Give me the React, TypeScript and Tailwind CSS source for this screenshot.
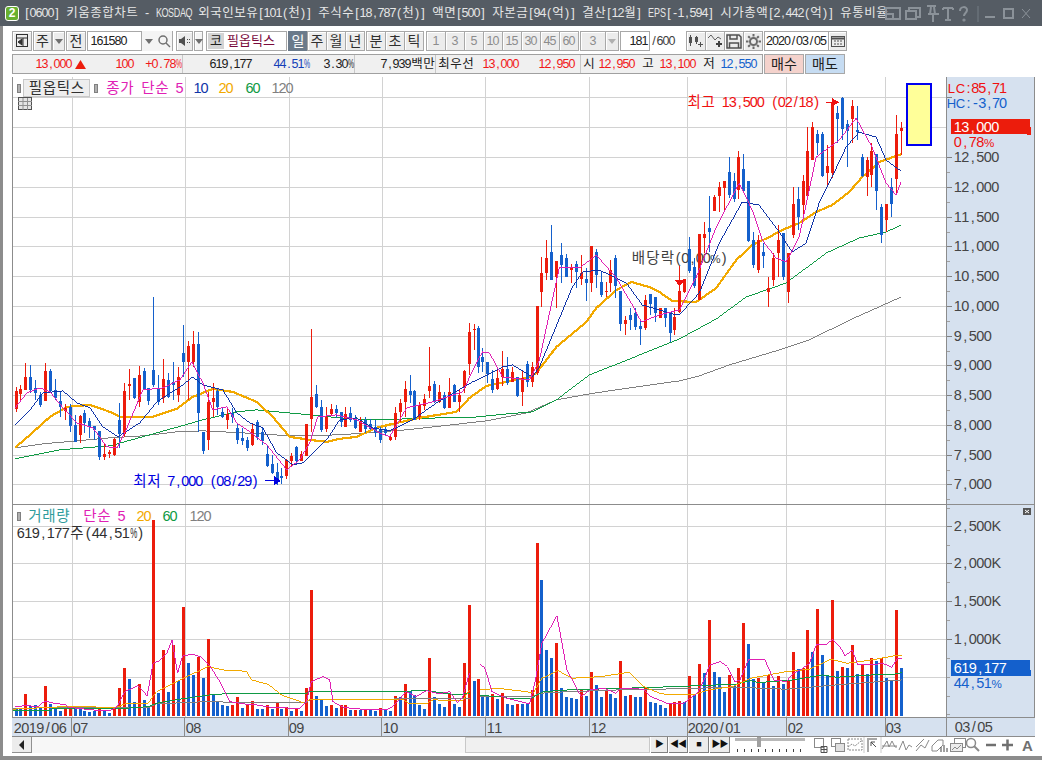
import React from "react";

const RED = "#ec1c0c";
const BLUE = "#1460cc";
const MAGENTA = "#e020b4";
const NAVY = "#1034a8";
const ORANGE = "#f2a900";
const GREEN = "#0f9a44";
const GRAY = "#808080";
const MONTHS = [72, 185, 289, 382, 486, 590, 688, 787, 886];

// candles: [red, bodyTop, bodyBottom, wickTop, wickBottom], read off a 3x crop
const candlesA = [
  [1,212,267,200,275],[1,207,222,195,240],[1,170,210,130,210],[0,170,210,135,220],[0,205,218,180,240],[0,225,255,215,262],
  [1,153,242,130,242],[0,152,212,148,215],[0,210,235,178,240],[0,243,260,215,290],[1,265,272,252,300],[0,262,318,252,335],
  [0,315,365,285,367],[1,287,345,285,370],[0,280,310,270,340],[0,303,320,295,355],[0,317,330,317,360],[0,332,413,332,420],
  [1,402,413,370,420],[1,398,403,392,415],[1,357,405,355,410],[0,300,342,248,385],[1,213,342,190,350],[1,192,197,147,240],
  [0,175,235,175,237],[1,165,245,138,260],[0,153,208,145,208],[0,205,242,205,255],[0,150,195,-69,200],[0,205,245,165,255],
  [1,178,235,118,250],[0,180,232,160,235],[0,186,194,125,240],[1,170,225,140,245],[0,100,127,15,170],[1,78,127,62,240],
  [1,72,127,33,140],[0,72,280,37,335],[0,335,395,335,403],[1,245,360,215,390],[1,235,245,190,290],[0,212,262,205,285],
  [0,275,290,262,295],[1,282,300,265,327],[0,280,290,265,310],[0,325,360,312,372],[0,355,362,325,375],[0,360,385,350,395],
  [1,326,375,310,378],[0,305,352,300,360],[0,335,362,320,375],[0,402,438,378,442],[0,432,460,405,462],[0,457,480,430,495],
  [0,468,476,445,493],[1,422,468,418,478],[1,410,423,400,440],[0,383,423,380,437],[1,402,423,395,425],[1,312,408,312,410],
  [1,232,296,28,335],[0,223,262,195,265],[0,262,330,240,335],[1,292,328,262,335],[1,267,283,253,285],[0,267,280,255,295],
];
const candlesB = [
  [0,575,605,575,620],[1,582,620,560,620],[0,578,600,560,605],[0,597,625,585,628],[1,603,635,590,635],[0,600,628,590,640],
  [0,612,628,598,630],[0,622,638,600,650],[0,630,660,620,670],[0,627,640,620,645],[1,652,660,648,662],[1,578,650,560,660],
  [1,548,575,538,605],[1,507,545,483,590],[0,513,525,465,550],[0,513,600,510,600],[1,555,590,545,600],[1,537,558,522,570],
  [1,497,512,380,535],[0,492,545,482,548],[1,517,545,495,550],[0,525,565,515,567],[1,517,565,475,565],[0,495,545,492,547],
  [1,525,545,510,575],[1,453,503,450,520],[1,337,432,310,465],[1,327,330,313,390],[0,325,440,317,458],[0,412,427,385,455],
  [0,427,462,425,490],[0,477,510,450,518],[1,473,507,447,510],[1,447,470,393,497],[0,447,490,412,495],[1,457,485,440,487],
  [0,472,527,472,530],[1,473,515,450,558],[0,432,485,422,500],[1,440,487,425,500],[1,258,460,258,465],[1,158,215,112,260],
  [1,113,160,60,180],[0,97,180,15,180],[1,123,170,122,263],[0,105,135,68,188],[0,113,170,103,170],[1,142,150,132,188],
  [0,132,155,122,205],[1,158,178,105,195],[0,177,188,145,242],[1,78,188,78,215],[0,97,165,87,205],[0,185,225,157,232],
  [1,212,215,185,232],[1,150,188,120,215],[0,113,197,105,235],[0,212,313,212,333],[1,300,313,287,345],[0,285,300,265,330],
  [0,280,320,265,330],[0,317,327,300,375],[1,240,325,225,330],[0,222,252,222,285],[0,232,280,232,307],[1,265,293,265,295],
  [0,265,295,265,320],[0,277,340,277,367],[1,290,330,265,345],
];
const candlesC = [
  [1,633,695,558,700],[1,597,637,597,640],[0,507,572,472,580],[0,562,618,535,625],[1,462,660,462,660],[1,462,475,427,520],
  [0,445,455,347,515],[1,350,392,345,392],[1,320,348,305,395],[1,303,323,303,392],[0,277,345,232,355],[0,303,358,280,365],
  [1,232,330,213,358],[0,267,333,222,340],[0,303,483,303,485],[0,480,555,455,565],[1,480,570,465,580],[0,516,528,490,565],
  [1,625,635,590,680],[1,535,600,520,617],[1,480,518,435,590],[0,460,590,460,600],[1,518,635,518,670],[1,373,465,322,475],
  [0,358,410,322,450],[1,303,375,285,410],[1,213,348,140,352],[1,140,240,125,240],[0,160,188,150,225],[0,160,288,155,290],
  [1,258,278,195,320],[1,68,280,55,295],[0,97,117,78,190],[0,52,145,50,180],[0,132,152,118,260],[1,78,117,60,190],
  [0,150,155,78,180],[0,232,288,222,290],[1,240,290,232,347],[1,213,285,190,322],[0,222,332,222,390],[0,380,465,372,490],
  [1,372,420,372,455],[0,322,372,295,410],[1,160,297,105,345],[1,142,152,125,225],
];
const toCandles = (rows: number[][], base: number) =>
  rows.map(([red, t, b, h, l]) => ({ red: !!red, top: base + t / 3, bottom: base + b / 3, high: base + h / 3, low: base + l / 3 }));
const candles = [...toCandles(candlesA, 320), ...toCandles(candlesB, 220), ...toCandles(candlesC, 80)];

// volume tops on the same 3x scale (y = 500 + v / 3), positive is a red bar, negative a blue one
const volumes = [
  -623,-627,582,-618,-616,-620,558,-612,-628,-632,628,620,-627,-627,-632,-635,-632,628,-630,-638,628,564,504,-537,-605,552,-600,-622,60,-578,
  450,-575,435,-543,320,-489,-525,472,-533,417,-585,-605,-615,-618,615,591,-623,613,603,-627,-627,615,-627,608,-627,622,-632,627,-632,564,
  270,-588,-600,-618,615,-623,616,616,-629,629,-629,626,-629,-632,624,-627,-632,588,-591,552,-573,-585,-615,-627,474,-591,-612,-621,580,-612,
  -621,489,315,-543,537,-590,-590,582,-597,579,-612,-615,612,-612,-612,570,128,-240,-450,-474,429,-564,-591,-594,-597,570,-588,516,-555,-591,
  570,-582,-594,483,-588,585,-591,-591,564,-606,-609,-615,-624,610,606,603,-606,528,-585,492,-519,360,-516,-531,-576,525,-558,504,369,-432,
  -536,534,-548,524,-558,528,-552,540,456,-508,504,390,-456,327,-465,-528,300,-513,501,-504,435,-522,495,-522,474,-483,474,-534,-540,330,-504,
];

const line = (pts: number[][], baseX: number, scaleX: number, baseY: number) =>
  pts.map(([x, y]) => `${(baseX + x / scaleX).toFixed(1)},${(baseY + y / 3).toFixed(1)}`).join(" ");

const priceLines = [
  { color: GRAY, w: 1, pts: "15,448 43,444 77,441 110,438 143,436 177,432 203,431 243,433 290,436 340,435 407,430 487,421 527,413 557,400 590,394 623,389 680,381 700,376 730,365 780,350 810,340 853,319 902,297" },
  { color: GREEN, w: 1, pts: "15,459 60,450 110,446 157,433 203,420 237,412 257,410 310,415 340,418 373,420 407,419 440,418 467,418 507,414 533,412 557,400 590,375 623,362 680,339 717,319 747,297 787,283 827,253 860,238 887,232 902,225" },
  { color: ORANGE, w: 2.2, pts: "15,448 30,435 50,417 67,407 90,405 110,412 120,417 153,417 177,409 193,397 213,389 233,392 257,402 273,417 290,437 310,440 327,442 340,439 357,437 377,428 393,424 420,418 457,412 470,398 487,386 527,378 537,373 557,347 587,322 597,308 617,290 632,282 650,287 660,292 673,301 697,302 717,288 737,260 753,245 770,237 783,230 800,223 817,212 833,205 850,192 863,177 880,162 902,154" },
  { color: NAVY, w: 1, pts: "15,425 30,410 43,393 63,391 77,403 90,408 103,427 118,437 140,423 157,402 183,385 193,377 203,385 223,390 237,413 250,423 263,428 277,453 293,465 303,463 327,440 340,420 357,418 373,428 390,431 413,420 437,403 473,382 503,367 513,365 533,377 540,367 573,287 583,272 600,270 627,283 643,305 677,315 680,315 700,293 720,243 743,202 760,205 780,232 793,252 807,243 820,203 830,183 847,147 860,132 877,137 887,160 902,171" },
  { color: MAGENTA, w: 1, pts: "15,408 27,393 40,388 50,392 63,408 77,423 93,428 107,447 117,448 127,428 143,390 163,388 180,380 192,362 203,383 213,410 227,407 237,423 250,432 267,445 287,470 300,460 310,443 318,417 337,415 357,420 380,433 390,437 407,408 433,402 463,392 477,363 483,352 490,353 503,377 530,380 540,360 560,267 580,268 597,255 617,278 633,305 642,322 660,315 680,310 697,277 717,227 740,183 753,210 763,240 777,258 787,262 800,237 817,157 840,140 857,118 873,147 887,183 897,195 902,182" },
];

const volLines = [
  {
    color: GRAY,
    a: [[5,625],[420,622],[440,612],[615,604],[645,607],[890,607],[900,600],[1380,595]],
    b: [[0,590],[150,590],[170,580],[250,575],[390,570],[500,568],[720,562],[860,568],[1000,555],[1183,540]],
  },
  {
    color: GREEN,
    a: [[5,632],[125,632],[126,627],[320,627],[415,620],[440,610],[510,598],[600,585],[670,580],[890,580],[900,574],[1180,574],[1250,572],[1340,585],[1380,580]],
    b: [[0,587],[60,590],[80,595],[145,595],[180,575],[250,570],[500,562],[720,553],[760,542],[780,548],[880,540],[960,525],[1000,532],[1100,525],[1170,522],[1183,518]],
  },
  {
    color: ORANGE,
    a: [[5,628],[165,620],[258,620],[260,623],[320,622],[350,610],[415,610],[440,575],[520,535],[595,500],[640,510],[710,514],[725,540],[775,553],[815,585],[885,610],[900,598],[1015,598],[1180,598],[1200,612],[1250,612],[1270,600],[1360,602],[1380,570]],
    b: [[0,570],[50,565],[130,575],[150,580],[175,535],[220,512],[260,535],[340,530],[420,517],[460,560],[510,582],[600,585],[640,570],[710,560],[760,535],[860,515],[925,508],[985,478],[1030,490],[1100,480],[1140,472],[1170,466],[1183,466]],
  },
  {
    color: MAGENTA,
    a: [[15,620],[50,617],[85,620],[105,603],[140,612],[165,613],[175,622],[245,630],[300,633],[320,622],[345,575],[385,557],[412,588],[430,490],[450,482],[470,462],[487,420],[503,520],[518,468],[545,463],[575,472],[600,497],[630,545],[660,605],[700,612],[740,615],[780,622],[870,626],[890,605],[905,545],[940,530],[960,540],[970,605],[1000,622],[1040,627],[1130,630],[1150,620],[1190,575],[1220,590],[1250,572],[1290,582],[1320,575],[1345,608],[1360,590],[1380,520]],
    b: [[0,495],[15,505],[35,575],[75,595],[140,612],[155,550],[175,430],[217,347],[245,510],[285,590],[310,570],[350,565],[382,580],[395,565],[460,568],[480,590],[530,612],[570,612],[610,580],[630,540],[645,495],[675,485],[695,500],[715,545],[730,540],[755,478],[800,480],[825,540],[860,545],[880,520],[900,510],[925,490],[945,432],[970,435],[990,418],[1010,440],[1025,468],[1045,450],[1060,495],[1100,495],[1130,490],[1155,502],[1172,475],[1183,475]],
  },
];

const barX = (i: number) => Math.round(15.5 + 4.925 * i);
const isWide = (c: string) => c.charCodeAt(0) > 0x2e80;

// the original uses a fixed-cell bitmap font: half cell for latin, full cell for hangul
function Mono({ text, half = 6, className = "" }: { text: string; half?: 6 | 7 | 7.5; className?: string }) {
  const cell = (c: string) => {
    if (half === 6) return isWide(c) ? "w-[12px]" : "w-[6px]";
    if (half === 7) return isWide(c) ? "w-[14px]" : "w-[7px]";
    return isWide(c) ? "w-[15px]" : "w-[7.5px]";
  };
  const squeeze = (c: string) => (c === "%" ? "scale-x-[0.55]" : "KOSDAQEP".includes(c) ? "scale-x-[0.72]" : "");
  return (
    <span className={`inline-flex items-baseline whitespace-pre ${className}`}>
      {[...text].map((c, i) => (
        <span key={i} className={`inline-flex shrink-0 justify-center ${cell(c)} ${squeeze(c)}`}>{c}</span>
      ))}
    </span>
  );
}

function Label({ x, y, text, half = 7.5, fill, size = 14.5 }: { x: number; y: number; text: string; half?: number; fill: string; size?: number }) {
  const glyph = (c: string): [number, number] => {
    if (isWide(c)) return [half * 2, size];
    if (c === "%") return [half * 1.4, size * 0.8];
    if (c === "K") return [9.5, size];
    if ("LHC".includes(c)) return [9, size * 0.9];
    return [half, size];
  };
  let cx = x;
  const chars = [...text].map((c) => {
    const [w, fs] = glyph(c);
    const at = cx + w / 2;
    cx += w;
    return { c, at, fs };
  });
  return (
    <text y={y} fontSize={size} fill={fill} textAnchor="middle">
      {chars.map(({ c, at, fs }, i) => (
        <tspan key={i} x={at} fontSize={fs}>{c}</tspan>
      ))}
    </text>
  );
}

function PriceChart() {
  const grid = [97, 127, 157, 187, 217, 246, 276, 306, 336, 365, 395, 425, 455, 484];
  return (
    <svg viewBox="13 77 934 427" width={934} height={427} className="block bg-white" shapeRendering="crispEdges">
      {grid.map((y) => (
        <rect key={y} x={13} y={y} width={934} height={1} fill="#d2d2d2" />
      ))}
      {MONTHS.map((x) => (
        <rect key={x} x={x} y={77} width={1} height={427} fill="#d2d2d2" />
      ))}
      <Label x={632} y={263} half={7.2} text="배당락(0,00%)" fill="#404040" />
      {priceLines.slice(0, 3).map((l) => (
        <polyline key={l.color} points={l.pts} fill="none" stroke={l.color} strokeWidth={l.w} />
      ))}
      {candles.map((c, i) => {
        const x = barX(i);
        const color = c.red ? RED : BLUE;
        return (
          <g key={i} fill={color}>
            <rect x={x} y={c.high} width={1} height={c.low - c.high} />
            <rect x={x - 1} y={c.top} width={3} height={Math.max(c.bottom - c.top, 1)} />
          </g>
        );
      })}
      {priceLines.slice(3).map((l) => (
        <polyline key={l.color} points={l.pts} fill="none" stroke={l.color} strokeWidth={l.w} />
      ))}
      <rect x={907.5} y={83.5} width={24} height={61} fill="#ffff99" stroke="#0000f0" strokeWidth={2} />
      <Label x={688} y={107} half={7} text="최고 13,500 (02/18)" fill="#f01010" />
      <path d="M827 102h8" stroke="#f01010" />
      <path d="M833 98l7 4-7 4z" fill="#f01010" />
      <Label x={133} y={486} half={7} text="최저 7,000 (08/29)" fill="#0000e0" />
      <path d="M265 481h10" stroke="#0000e0" />
      <path d="M274 476l7 5-7 5z" fill="#0000e0" />
      <path d="M675 280h11l-5.500 6z" fill="#f01010" />
    </svg>
  );
}

function VolumeChart() {
  const grid = [526, 563, 601, 639, 677];
  return (
    <svg viewBox="13 505 934 212" width={934} height={212} className="block bg-white" shapeRendering="crispEdges">
      {grid.map((y) => (
        <rect key={y} x={13} y={y} width={934} height={1} fill="#d2d2d2" />
      ))}
      {MONTHS.map((x) => (
        <rect key={x} x={x} y={505} width={1} height={212} fill="#d2d2d2" />
      ))}
      {volumes.map((v, i) => {
        const top = 500 + Math.abs(v) / 3;
        return <rect key={i} x={barX(i) - 1} y={top} width={3} height={716 - top} fill={v > 0 ? RED : BLUE} />;
      })}
      {volLines.map((l) => (
        <g key={l.color} fill="none" stroke={l.color} strokeWidth={1}>
          <polyline points={line(l.a, 10, 3, 500)} />
          <polyline points={line(l.b, 480, 2.8, 500)} />
        </g>
      ))}
    </svg>
  );
}

function PriceAxis() {
  const labels: [string, number][] = [
    ["12,500", 157], ["12,000", 187], ["11,500", 217], ["11,000", 246], ["10,500", 276], ["10,000", 306],
    ["9,500", 336], ["9,000", 365], ["8,500", 395], ["8,000", 425], ["7,500", 455], ["7,000", 484],
  ];
  return (
    <svg viewBox="948 77 87 427" width={87} height={427} className="block">
      {labels.map(([t, y]) => (
        <g key={t}>
          <rect x={948} y={y} width={5} height={1} fill="#808080" shapeRendering="crispEdges" />
          <rect x={948} y={y + 15} width={3} height={1} fill="#a0a0a0" shapeRendering="crispEdges" />
          <Label x={955} y={y + 5} text={t} fill="#454545" />
        </g>
      ))}
      <rect x={948} y={97} width={5} height={1} fill="#808080" />
      <Label x={948} y={93} half={6.9} text="LC:85,71" fill="#f01010" />
      <Label x={948} y={108} half={6.9} text="HC:-3,70" fill="#1460cc" />
      <rect x={952} y={119} width={79} height={15} fill="#ec1c0c" />
      <rect x={1028} y={127} width={4} height={8} fill="#ec1c0c" />
      <Label x={955} y={132} text="13,000" fill="#ffffff" />
      <Label x={955} y={147} text="0,78%" fill="#f01010" />
    </svg>
  );
}

function VolumeAxis() {
  const labels: [string, number][] = [["2,500K", 526], ["2,000K", 563], ["1,500K", 601], ["1,000K", 639]];
  const minor = [508, 545, 582, 620, 658, 677, 696, 714];
  return (
    <svg viewBox="948 505 87 212" width={87} height={212} className="block">
      {minor.map((y) => (
        <rect key={y} x={948} y={y} width={3} height={1} fill="#a0a0a0" shapeRendering="crispEdges" />
      ))}
      {labels.map(([t, y]) => (
        <g key={t}>
          <rect x={948} y={y} width={5} height={1} fill="#808080" shapeRendering="crispEdges" />
          <Label x={955} y={y + 5} text={t} fill="#454545" />
        </g>
      ))}
      <rect x={1024} y={508} width={8} height={7} fill="#555555" />
      <path d="M1026 510l4 3m0-3l-4 3" stroke="#ffffff" />
      <rect x={952} y={660} width={79} height={16} fill="#1460cc" />
      <rect x={1028} y={670} width={4} height={6} fill="#1460cc" />
      <Label x={955} y={673} text="619,177" fill="#ffffff" />
      <Label x={955} y={688} text="44,51%" fill="#1460cc" />
    </svg>
  );
}

function Btn({ className = "", children }: { className?: string; children?: React.ReactNode }) {
  return (
    <div className={`flex h-[20px] shrink-0 items-center justify-center border border-[#a8a8a8] bg-[#ececec] shadow-[inset_1px_1px_0_#ffffff] text-[14px] text-[#303030] ${className}`}>
      {children}
    </div>
  );
}

const Caret = () => <div className="h-0 w-0 border-x-[4px] border-t-[5px] border-x-transparent border-t-[#707070]" />;

function TitleBar() {
  const c = "#8b9299";
  return (
    <div className="flex h-[26px] shrink-0 items-center bg-[#555c64]">
      <div className="ml-[5px] flex h-[15px] w-[14px] items-center justify-center rounded-[3px] border border-white bg-[#68b030] text-[12px] font-bold leading-none text-white">2</div>
      <div className="ml-[5px] w-[864px] text-[12.5px] text-[#e6e6e6]">
        <Mono text="[0600] 키움종합차트 - KOSDAQ 외국인보유[101(천)] 주식수[18,787(천)] 액면[500] 자본금[94(억)] 결산[12월] EPS[-1,594] 시가총액[2,442(억)] 유통비율" />
      </div>
      <svg width={148} height={26} viewBox="0 0 148 26" className="ml-[-4px]" fill="none" stroke={c} strokeWidth={2}>
        <rect x={2} y={8} width={14} height={11} />
        <path d="M2 14h7v5" />
        <path d="M25 11v-3h11v9h-3" />
        <rect x={22} y={11} width={10} height={8} />
        <path d="M43 6h9M44 14h11M47 7l-1 7M50 7l1 7" />
        <path d="M49 14v8" />
        <path d="M59 8h10M64 8v12M61 20h6M59 8v2M69 8v2" />
        <path d="M76 11c0-5 7-5 7-1 0 3-3 3-3 6" />
        <circle cx={80} cy={20} r={0.6} />
        <path d="M94 6v16" stroke="#757c84" strokeWidth={1} />
        <path d="M101 17h10" />
        <rect x={120} y={9} width={9} height={9} />
        <path d="M138 9l8 9m0-9l-8 9" strokeWidth={1} />
      </svg>
    </div>
  );
}

function Toolbar() {
  const tf = ["1", "3", "5", "10", "15", "30", "45", "60"];
  return (
    <div className="flex h-[20px] items-center">
      <Btn className="w-[20px]">
        <svg width={16} height={16} viewBox="0 0 16 16" fill="none" stroke="#303030">
          <rect x={2.500} y={1.500} width={11} height={12} />
          <path d="M2 5h12M9 5v9" />
          <path d="M8 6l-4 3 4 3z" fill="#303030" />
        </svg>
      </Btn>
      <Btn className="ml-[1px] w-[19px]">주</Btn>
      <Btn className="w-[13px]"><Caret /></Btn>
      <Btn className="ml-[1px] w-[20px]">전</Btn>
      <div className="ml-[1px] flex h-[20px] w-[55px] items-center border border-[#a8a8a8] bg-white pl-[3px] text-[12.5px] text-[#202020]"><Mono text="161580" /></div>
      <div className="flex h-[20px] w-[13px] items-center justify-center bg-[#f4f4f4]"><Caret /></div>
      <div className="flex h-[20px] w-[18px] items-center justify-center border-r border-[#a8a8a8] bg-[#f4f4f4]">
        <svg width={14} height={14} viewBox="0 0 14 14" fill="none" stroke="#707070" strokeWidth={1.500}>
          <circle cx={6} cy={6} r={4} />
          <path d="M9 9l4 4" />
        </svg>
      </div>
      <div className="w-[3px]" />
      <Btn className="w-[17px]">
        <svg width={13} height={12} viewBox="0 0 13 12" fill="#505050">
          <path d="M1 4h2l4-3v10l-4-3h-2z" />
          <path d="M9 4h1v1h-1zM11 4h1v1h-1zM9 7h1v1h-1zM11 7h1v1h-1z" />
        </svg>
      </Btn>
      <Btn className="ml-[1px] w-[9px] bg-[#f4f4f4]"><Caret /></Btn>
      <div className="w-[3px]" />
      <div className="flex h-[20px] w-[81px] items-center border border-[#a8a8a8] bg-white">
        <div className="ml-[1px] flex h-[16px] w-[16px] items-center justify-center bg-[#d4d4d4] text-[13px] text-[#202020]">코</div>
        <div className="ml-[3px] whitespace-nowrap text-[13px] text-[#7a0a3c]">필옵틱스</div>
      </div>
      <Btn className="ml-[1px] w-[20px] !border-[#6b7a8a] !bg-[#6b7a8a] !text-white !shadow-none">일</Btn>
      {["주", "월", "년"].map((t) => (
        <Btn key={t} className="ml-[-1px] w-[20px]">{t}</Btn>
      ))}
      <div className="w-[2px]" />
      {["분", "초", "틱"].map((t) => (
        <Btn key={t} className="ml-[-1px] w-[20px]">{t}</Btn>
      ))}
      <div className="w-[3px]" />
      {tf.map((t) => (
        <Btn key={t} className="ml-[-1px] w-[20px] !text-[12.5px] !text-[#8c8c8c]"><Mono text={t} /></Btn>
      ))}
      <div className="w-[1px]" />
      <Btn className="w-[26px] !text-[12.5px] !text-[#8c8c8c]">3</Btn>
      <Btn className="ml-[-1px] w-[14px]"><div className="h-0 w-0 border-x-[4px] border-t-[5px] border-x-transparent border-t-[#b0b0b0]" /></Btn>
      <div className="ml-[1px] flex h-[20px] w-[30px] items-center justify-end border border-[#a8a8a8] bg-white pr-[1px] text-[12.5px] text-[#202020]"><Mono text="181" /></div>
      <div className="ml-[1px] w-[35px] text-[12.5px] text-[#404040]"><Mono text="/600" /></div>
      <Btn className="w-[20px]">
        <svg width={16} height={14} viewBox="0 0 16 14" fill="#505050">
          <path d="M2 1h1v2h1v6h-1v3h-1v-3h-1v-6h1zM8 2h1v1h1v5h-1v2h-1v-2h-1v-5h1zM12 8h1v2h2v1h-2v2h-1v-2h-2v-1h2z" />
        </svg>
      </Btn>
      <Btn className="ml-[-1px] w-[20px]">
        <svg width={16} height={14} viewBox="0 0 16 14" fill="none" stroke="#606060">
          <path d="M1 4l3-3 4 5 3-3 3 2" />
          <path d="M12 7v6M9 10h6" strokeWidth={2} stroke="#404040" />
        </svg>
      </Btn>
      <Btn className="ml-[-1px] w-[20px]">
        <svg width={16} height={15} viewBox="0 0 16 15" fill="none" stroke="#505050" strokeWidth={1.500}>
          <path d="M1 1h12l2 2v11h-14z" />
          <path d="M4 1v4h7v-4M3.500 14v-5h9v5" />
        </svg>
      </Btn>
      <Btn className="ml-[-1px] w-[20px]">
        <svg width={15} height={15} viewBox="0 0 15 15" fill="none" stroke="#6a6a6a" strokeWidth={2}>
          <circle cx={7.500} cy={7.500} r={3.500} />
          <path d="M7.500 0v2.500M7.500 12.500v2.500M0 7.500h2.500M12.500 7.500h2.500M2.200 2.200l1.800 1.800M11 11l1.800 1.800M2.200 12.800l1.800-1.800M11 4l1.800-1.800" />
        </svg>
      </Btn>
      <div className="ml-[1px] flex h-[20px] w-[65px] items-center justify-center border border-[#a8a8a8] bg-white text-[12.5px] text-[#202020]"><Mono text="2020/03/05" /></div>
      <Btn className="ml-[-1px] w-[19px]">
        <svg width={14} height={12} viewBox="0 0 14 12" fill="none" stroke="#505050">
          <rect x={0.500} y={1.500} width={13} height={10} />
          <path d="M0 3.500h14" strokeWidth={2} />
          <path d="M3 6h2M6 6h2M9 6h2M3 9h2M6 9h2M9 9h2" />
        </svg>
      </Btn>
    </div>
  );
}

function InfoRow() {
  const r = "text-[#f01818]";
  const cell = "flex justify-end";
  return (
    <div className="mt-[3px] flex h-[20px] items-center">
      <div className="flex h-[20px] w-[751px] shrink-0 items-center border border-[#a0a0a0] bg-[#f0f0f0] text-[12.5px] text-[#202020]">
        <span className={`${cell} w-[59px] ${r}`}><Mono text="13,000" /></span>
        <svg width={11} height={9} viewBox="0 0 11 9" className="ml-[3px]"><path d="M5.500 0l5.500 9h-11z" fill="#ec1c0c" /></svg>
        <span className={`${cell} w-[48px] ${r}`}><Mono text="100" /></span>
        <span className={`${cell} w-[48px] ${r}`}><Mono text="+0.78%" /></span>
        <span className="h-full w-[1px] bg-[#c8c8c8]" />
        <span className={`${cell} w-[69px]`}><Mono text="619,177" /></span>
        <span className={`${cell} w-[58px] text-[#1440b8]`}><Mono text="44.51%" /></span>
        <span className={`${cell} w-[44px]`}><Mono text="3.30%" /></span>
        <span className="h-full w-[1px] bg-[#c8c8c8]" />
        <span className={`${cell} w-[80px]`}><Mono text="7,939백만" /></span>
        <span className="h-full w-[1px] bg-[#c8c8c8]" />
        <span className="ml-[2px] w-[41px]"><Mono text="최우선" /></span>
        <span className={`${cell} w-[40px] ${r}`}><Mono text="13,000" /></span>
        <span className={`${cell} w-[56px] ${r}`}><Mono text="12,950" /></span>
        <span className="h-full w-[1px] bg-[#c8c8c8] ml-[5px]" />
        <span className="ml-[1px] w-[14px] text-center">시</span>
        <span className={`${cell} ml-[3px] w-[36px] ${r}`}><Mono text="12,950" /></span>
        <span className="ml-[7px] w-[12px] text-center">고</span>
        <span className={`${cell} ml-[6px] w-[36px] ${r}`}><Mono text="13,100" /></span>
        <span className="ml-[6px] w-[14px] text-center">저</span>
        <span className={`${cell} ml-[5px] w-[36px] text-[#1460cc]`}><Mono text="12,550" /></span>
      </div>
      <div className="ml-[1px] flex h-[20px] w-[40px] items-center justify-center border border-[#a8a8a8] bg-[#f4d2cc] text-[14px] text-[#202020]">매수</div>
      <div className="ml-[1px] flex h-[20px] w-[40px] items-center justify-center border border-[#a8a8a8] bg-[#c6dcf2] text-[14px] text-[#202020]">매도</div>
    </div>
  );
}

function TimeAxis() {
  const labels: [string, number][] = [
    ["2019/06", 2], ["07", 61], ["08", 174], ["09", 277], ["10", 371], ["11", 475], ["12", 579], ["2020/01", 676], ["02", 776], ["03", 874],
  ];
  return (
    <div className="flex h-[20px] border-y border-[#8c8c8c] bg-[#d6e1ef]">
      <svg viewBox="13 0 934 18" width={934} height={18} className="block shrink-0 overflow-visible">
        {MONTHS.map((x) => (
          <rect key={x} x={x} y={0} width={1} height={18} fill="#8c8c8c" shapeRendering="crispEdges" />
        ))}
        {labels.map(([t, x]) => (
          <Label key={t} x={x + 13} y={15} text={t} fill="#454545" />
        ))}
      </svg>
      <div className="flex-1 border-l border-[#8c8c8c] pl-[8px] text-[14.5px] leading-[18px] text-[#454545]"><Mono half={7.5} text="03/05" /></div>
    </div>
  );
}

function ToolIcons() {
  const s = "#8a8a8a";
  return (
    <svg width={220} height={16} viewBox="0 0 220 16" fill="none" stroke={s} className="ml-[7px] shrink-0">
      <rect x={0.500} y={1.500} width={9} height={9} />
      <path d="M7 12.500h6M10 9.500v6M7 9.500h6v6h-6z" stroke="#505050" />
      <rect x={17.500} y={1.500} width={9} height={8} />
      <rect x={21.500} y={6.500} width={9} height={8} fill="#e0e0e0" />
      <path d="M34 2h14v11h-14z M34 10l4-3 3 2 6-5" strokeDasharray="2 1" />
      <rect x={50} y={-2} width={17} height={20} fill="#ffffff" stroke="#cccccc" />
      <path d="M53 2h10M54 3v12M57 5l5 5M57 5h4M57 5v4" stroke="#505050" />
      <path d="M68 12l5-8 2 6 3-6 3 6h2M68 9h15" />
      <path d="M85 13l4-9 3 9 3-5 3 2" />
      <path d="M102 14l5-6 4 3 4-8M102 10l8-8" />
      <path d="M118 9l6-6h5v5l-6 6h-5z" />
      <path d="M127 10v5M130 8v7M133 11v4" stroke="#404040" />
      <rect x={140.500} y={1.500} width={11} height={9} />
      <rect x={136.500} y={6.500} width={12} height={8} fill="#ececec" />
      <path d="M138 13l3-3 2 2 4-4" />
      <circle cx={157} cy={6} r={4.500} strokeWidth={1.500} />
      <path d="M160 9l5 5" strokeWidth={2} />
      <path d="M172 8h10M188 8h11M193.500 2.500v11" stroke="#707070" strokeWidth={2.500} />
    </svg>
  );
}

function ScrollBar() {
  return (
    <div className="flex h-[16px] items-center">
      <div className="flex h-[16px] w-[20px] items-center justify-center border-b border-r border-[#909090] bg-[#ececec]">
        <div className="h-0 w-0 border-y-[5px] border-r-[5px] border-y-transparent border-r-[#202020]" />
      </div>
      <div className="h-[16px] w-[433px] bg-[#f7f7f7]" />
      <div className="h-[16px] w-[185px] border border-[#c8c8c8] bg-[#f0f0f0]" />
      {[["▶", 17], ["◀◀", 19], ["■", 20], ["▶▶", 20]].map(([t, w]) => (
        <div key={t as string} className={`ml-[1px] flex h-[16px] items-center justify-center border-b border-r border-[#808080] bg-[#ececec] text-[9px] tracking-[-1px] text-[#101010] ${w === 17 ? "w-[17px]" : w === 19 ? "w-[19px]" : "w-[20px]"}`}>{t}</div>
      ))}
      <svg width={72} height={16} viewBox="0 0 72 16" className="ml-[5px] shrink-0">
        <rect x={0} y={1} width={70} height={3} fill="#b8b8b8" />
        <rect x={22} y={0} width={4} height={10} fill="#a0a0a0" />
        {[2, 9, 16, 23, 30, 37, 44, 51, 58, 65].map((x) => (
          <rect key={x} x={x} y={12} width={1} height={3} fill="#404040" />
        ))}
      </svg>
      <ToolIcons />
      <span className="ml-[-12px] text-[15px] font-bold leading-none text-[#707070]">A</span>
    </div>
  );
}

function Legend() {
  return (
    <div className="pointer-events-none absolute left-[4px] top-[2px]">
      <div className="flex items-center text-[14.5px] leading-[18px]">
        <div className="h-[9px] w-[4px] border border-[#808080] bg-[#b0b0b0]" />
        <div className="ml-[2px] flex h-[18px] w-[67px] items-center justify-center border border-[#c8c8c8] bg-[#eeeeee] text-[#303030]"><Mono half={7} text="필옵틱스" /></div>
        <div className="ml-[4px] h-[9px] w-[4px] border border-[#808080] bg-[#b0b0b0]" />
        <span className="ml-[8px] w-[88px] text-[#e020b4]"><Mono half={7} text="종가 단순 5" /></span>
        <span className="w-[25px] text-[#1034a8]"><Mono half={7} text="10" /></span>
        <span className="w-[27px] text-[#f2a900]"><Mono half={7} text="20" /></span>
        <span className="w-[26px] text-[#0f9a44]"><Mono half={7} text="60" /></span>
        <span className="text-[#808080]"><Mono half={7} text="120" /></span>
      </div>
      <svg width={15} height={14} viewBox="0 0 15 14" fill="#e4e4e4" stroke="#505050" className="ml-[1px] mt-0">
        <rect x={0.500} y={0.500} width={13} height={12} />
        <path d="M0 4.500h14M0 8.500h14M5 1v12M9.500 1v12" stroke="#909090" />
      </svg>
    </div>
  );
}

function VolumeLegend() {
  return (
    <div className="pointer-events-none absolute left-[4px] top-[2px] text-[14.5px] leading-[18px]">
      <div className="flex items-center">
        <div className="h-[9px] w-[4px] border border-[#808080] bg-[#b0b0b0]" />
        <span className="ml-[7px] w-[55px] text-[#2f9c9c]"><Mono half={7} text="거래량" /></span>
        <span className="w-[54px] text-[#e020b4]"><Mono half={7} text="단순 5" /></span>
        <span className="w-[26px] text-[#f2a900]"><Mono half={7} text="20" /></span>
        <span className="w-[27px] text-[#0f9a44]"><Mono half={7} text="60" /></span>
        <span className="text-[#808080]"><Mono half={7} text="120" /></span>
      </div>
      <div className="text-[#303030] -mt-[1px]"><Mono half={7.5} text="619,177주(44,51%)" /></div>
    </div>
  );
}

export default function App() {
  return (
    <div className="flex h-[760px] w-[1042px] flex-col overflow-hidden bg-white [font-family:'Liberation_Sans','Noto_Sans_CJK_KR',sans-serif]">
      <TitleBar />
      <div className="flex min-h-0 flex-1 border-b-4 border-l-[3px] border-[#8c8c8c]">
        <div className="flex w-full flex-col bg-white pl-[9px] pr-[7px] pt-[5px]">
          <Toolbar />
          <InfoRow />
          <div className="mt-[3px] border-l border-[#8c8c8c]">
            <div className="relative flex">
              <PriceChart />
              <div className="flex-1 border-l border-r border-[#8c8c8c] bg-[#d6e1ef]"><PriceAxis /></div>
              <Legend />
            </div>
            <div className="h-[1px] bg-[#8c8c8c]" />
            <div className="relative flex">
              <VolumeChart />
              <div className="flex-1 border-l border-r border-[#8c8c8c] bg-[#d6e1ef]"><VolumeAxis /></div>
              <VolumeLegend />
            </div>
          </div>
          <TimeAxis />
          <ScrollBar />
        </div>
      </div>
    </div>
  );
}
